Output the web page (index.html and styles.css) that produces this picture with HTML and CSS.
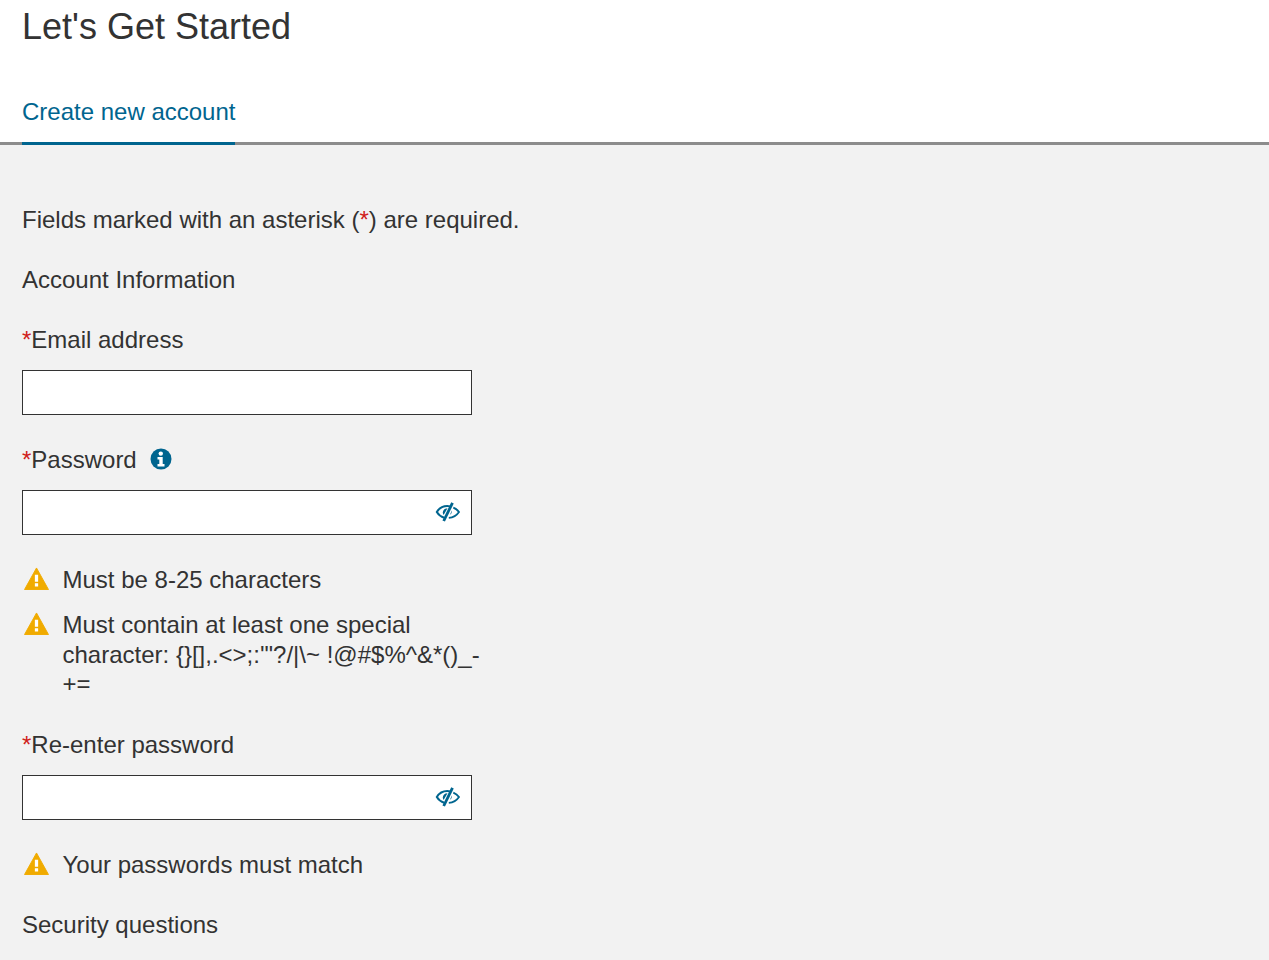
FILE: index.html
```html
<!DOCTYPE html>
<html lang="en">
<head>
  <meta charset="UTF-8" />
  <title>Let's Get Started</title>
  <link rel="stylesheet" href="styles.css">
</head>
<body>

  <header class="top">
    <h1>Let's Get Started</h1>
    <nav class="tabs">
      <a class="tab active" href="#">Create new account</a>
    </nav>
  </header>

  <main class="content">
    <p class="line">Fields marked with an asterisk (<span class="req">*</span>) are required.</p>
    <h2 class="line">Account Information</h2>

    <form autocomplete="off">
      <label class="line" for="email"><span class="req">*</span>Email address</label>
      <div class="field">
        <input type="text" id="email" />
      </div>

      <label class="line" for="pass">
        <span class="req">*</span>Password
        <svg class="info" viewBox="0 0 22 22" aria-hidden="true">
          <circle cx="11" cy="11" r="10.5" fill="#00658f" />
          <circle cx="10.8" cy="5.6" r="2.2" fill="#fff" />
          <path d="M7.5 9h5.2v7h1.8v2.6H7.5V16h1.8v-4.4H7.5z" fill="#fff" />
        </svg>
      </label>
      <div class="field">
        <input type="password" id="pass" />
        <svg class="eye" viewBox="0 0 26 20" aria-hidden="true">
          <path d="M15 4.400C14 4.100 13 4 12.300 4 7.800 4 4 6.400 1.800 10c1.700 2.800 4.300 4.800 7.400 5.700" fill="none" stroke="#00658f" stroke-width="2" />
          <path d="M12.500 6.200c-2.800 0-4.700 2-4.700 4.300 0 .9.300 1.800.8 2.500z" fill="#00658f" />
          <path d="M17.500 .8 8.700 19" stroke="#00658f" stroke-width="2.800" fill="none" />
          <path d="M18.300 5.600c2.400.9 4.300 2.400 5.700 4.400-2.200 3.300-5.900 5.500-10.200 5.800" fill="none" stroke="#00658f" stroke-width="1.800" />
          <path d="M16.800 8.500c.3 1.700-.4 3.300-1.800 4.200z" fill="#00658f" />
        </svg>
      </div>

      <ul class="rules">
        <li>
          <svg class="warn" viewBox="0 0 26 24" aria-hidden="true"><path d="M13 1 25.500 23.500H.5z" fill="#f0ab00" stroke="#f0ab00" stroke-linejoin="round" /><path d="M11.300 8h3.400v7.500h-3.400zM11.300 17h3.400v3.300h-3.400z" fill="#fff" /></svg>
          <span>Must be 8-25 characters</span>
        </li>
        <li>
          <svg class="warn" viewBox="0 0 26 24" aria-hidden="true"><path d="M13 1 25.500 23.500H.5z" fill="#f0ab00" stroke="#f0ab00" stroke-linejoin="round" /><path d="M11.300 8h3.400v7.500h-3.400zM11.300 17h3.400v3.300h-3.400z" fill="#fff" /></svg>
          <span>Must contain at least one special character: {}[],.&lt;&gt;;:'"?/|\~ !@#$%^&amp;*()_-+=</span>
        </li>
      </ul>

      <label class="line" for="pass2"><span class="req">*</span>Re-enter password</label>
      <div class="field">
        <input type="password" id="pass2" />
        <svg class="eye" viewBox="0 0 26 20" aria-hidden="true">
          <path d="M15 4.400C14 4.100 13 4 12.300 4 7.800 4 4 6.400 1.800 10c1.700 2.800 4.300 4.800 7.400 5.700" fill="none" stroke="#00658f" stroke-width="2" />
          <path d="M12.500 6.200c-2.800 0-4.700 2-4.700 4.300 0 .9.300 1.800.8 2.500z" fill="#00658f" />
          <path d="M17.500 .8 8.700 19" stroke="#00658f" stroke-width="2.800" fill="none" />
          <path d="M18.300 5.600c2.400.9 4.300 2.400 5.700 4.400-2.200 3.300-5.900 5.500-10.200 5.800" fill="none" stroke="#00658f" stroke-width="1.800" />
          <path d="M16.800 8.500c.3 1.700-.4 3.300-1.800 4.200z" fill="#00658f" />
        </svg>
      </div>

      <ul class="rules">
        <li>
          <svg class="warn" viewBox="0 0 26 24" aria-hidden="true"><path d="M13 1 25.500 23.500H.5z" fill="#f0ab00" stroke="#f0ab00" stroke-linejoin="round" /><path d="M11.300 8h3.400v7.500h-3.400zM11.300 17h3.400v3.300h-3.400z" fill="#fff" /></svg>
          <span>Your passwords must match</span>
        </li>
      </ul>

      <h2 class="line">Security questions</h2>
    </form>
  </main>

</body>
</html>
```

FILE: styles.css
```css
/* RESET */
* {
  margin: 0;
  padding: 0;
  box-sizing: border-box;
}

html, body {
  height: 100%;
  overflow: hidden;
  font-family: "Liberation Sans", Arial, sans-serif;
  color: #333;
  background: #f2f2f2;
}

.top {
  background: #fff;
  height: 145px;
  border-bottom: 3px solid #8c8c8c;
  padding: 5px 22px 0;
}

h1 {
  font-size: 36px;
  font-weight: 400;
  line-height: 43px;
}

.tabs {
  display: flex;
  margin-top: 44px;
}

.tab {
  display: block;
  height: 53px;
  font-size: 24px;
  line-height: 29px;
  padding-top: 5px;
  color: #00658f;
  text-decoration: none;
  border-bottom: 3px solid #00658f;
}

.content {
  padding: 60px 22px 0;
  font-size: 24px;
  line-height: 29px;
}

.line {
  display: block;
  font-size: 24px;
  font-weight: 400;
  line-height: 29px;
  margin-bottom: 31px;
}

.req {
  color: #d0211c;
}

label.line {
  margin-bottom: 16px;
}

.info {
  width: 22px;
  height: 22px;
  margin-left: 7px;
  vertical-align: -2px;
}

.field {
  position: relative;
  width: 450px;
  margin-bottom: 30px;
}

input {
  display: block;
  width: 100%;
  height: 45px;
  background: #fff;
  border: 1px solid #333;
  padding: 0 50px 0 10px;
  font-size: 24px;
  font-family: inherit;
}

.eye {
  position: absolute;
  top: 12px;
  right: 11px;
  width: 26px;
  height: 20px;
}

.rules {
  list-style: none;
  width: 460px;
  margin-bottom: 31px;
  line-height: 29.5px;
}

.rules li {
  display: flex;
  gap: 13.5px;
  margin-bottom: 15.5px;
}

.rules li:last-child {
  margin-bottom: 0;
}

.warn {
  flex: none;
  width: 25px;
  height: 23px;
  margin-top: 2px;
  margin-left: 2px;
}
```
